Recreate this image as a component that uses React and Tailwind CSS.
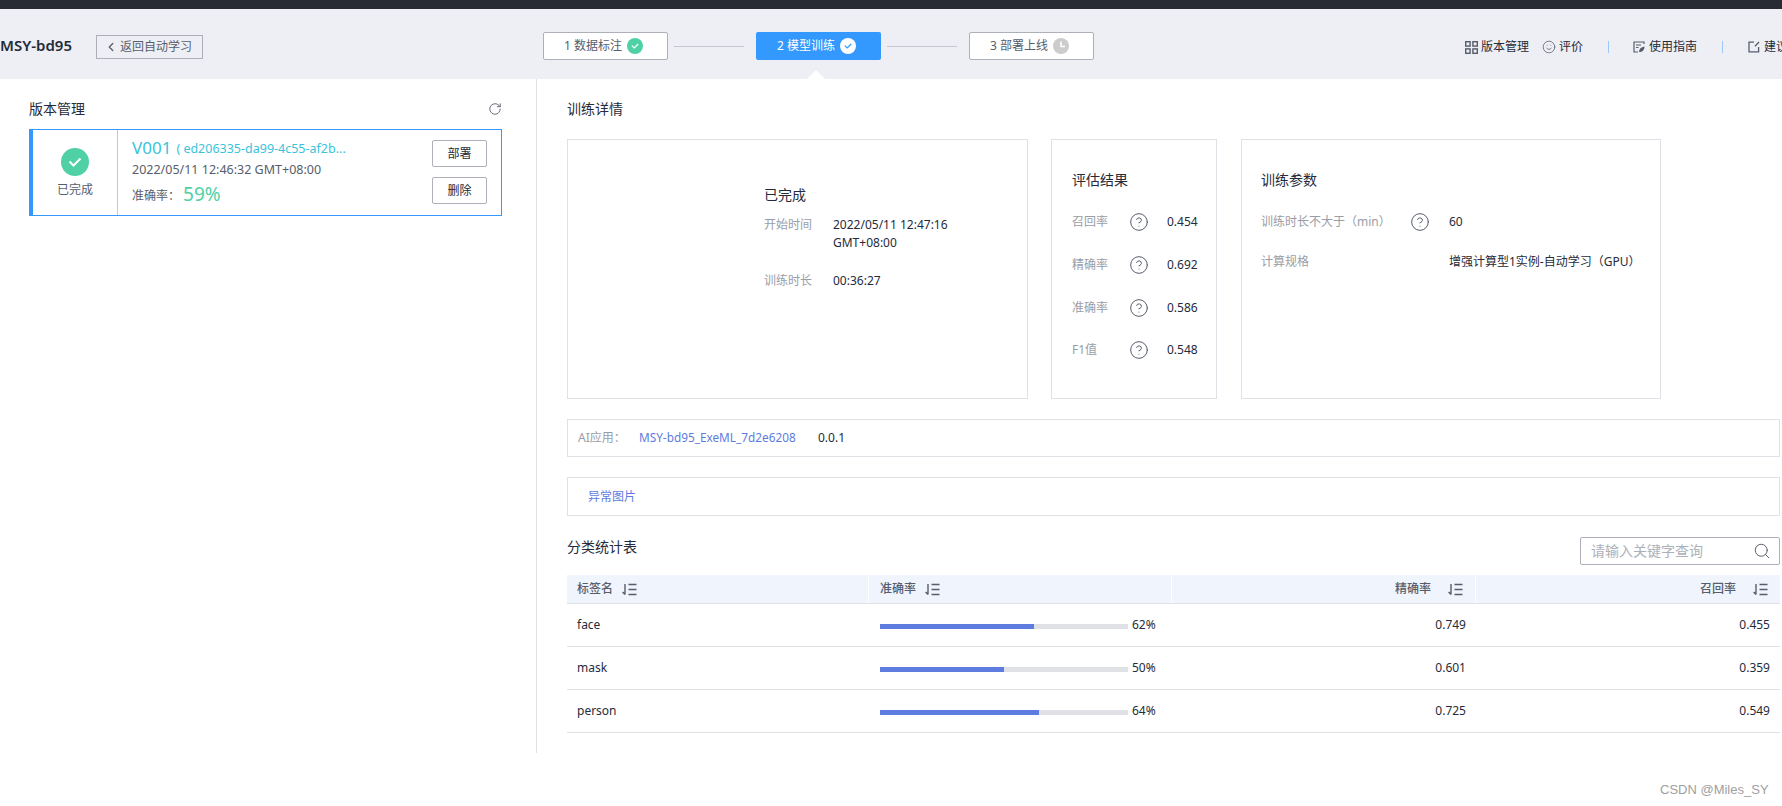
import React from "react";
import { ChevronLeft, RotateCw, Smile, Search, CircleHelp } from "lucide-react";

const SortIcon = () => (
  <svg width="15" height="13" viewBox="0 0 15 13" fill="none" stroke="#575d6c" strokeWidth="1.4" className="shrink-0">
    <path d="M3 1v10.5M0.6 9L3 11.5" />
    <path d="M6.5 1.5h8M6.5 6.5h8M6.5 11.5h8" strokeWidth="1.6" />
  </svg>
);

const CheckDot = ({ bg, stroke }) => (
  <svg width="16" height="16" viewBox="0 0 16 16" className="shrink-0">
    <circle cx="8" cy="8" r="8" fill={bg} />
    <path d="M4.8 7.6l2.4 2.4 4-4" fill="none" stroke={stroke} strokeWidth="1.2" />
  </svg>
);

const ClockDot = () => (
  <svg width="16" height="16" viewBox="0 0 16 16" className="shrink-0">
    <circle cx="8" cy="8" r="8" fill="#ccc" />
    <path d="M8 3.5v5h4" fill="none" stroke="#fff" strokeWidth="1.6" />
  </svg>
);

const GridIcon = () => (
  <svg width="13" height="13" viewBox="0 0 13 13" fill="none" stroke="#575d6c" strokeWidth="1.4" className="shrink-0">
    <rect x="0.7" y="0.7" width="4.4" height="4.4" />
    <rect x="7.9" y="0.7" width="4.4" height="4.4" />
    <rect x="0.7" y="7.9" width="4.4" height="4.4" />
    <rect x="7.9" y="7.9" width="4.4" height="4.4" />
  </svg>
);

const GuideIcon = () => (
  <svg width="12" height="12" viewBox="0 0 12 12" fill="none" stroke="#575d6c" strokeWidth="1.2" className="shrink-0">
    <path d="M11 3V1H1v10h4" />
    <path d="M3 4h5M3 6.5h2.5" strokeWidth="1" />
    <path d="M6 11c0-3 2-5 5.5-5.5C11.5 9 9.5 11 6 11z" fill="#575d6c" stroke="none" />
  </svg>
);

const FeedbackIcon = () => (
  <svg width="12" height="12" viewBox="0 0 12 12" fill="none" stroke="#575d6c" strokeWidth="1.3" className="shrink-0">
    <path d="M6 1.2H1v9.6h9.6V6" />
    <path d="M7 5.2L11 1" />
  </svg>
);

const Help = () => <CircleHelp size={20} strokeWidth={1.2} color="#575d6c" className="-ml-[2px]" />;

const metrics = [
  { label: "召回率", value: "0.454" },
  { label: "精确率", value: "0.692" },
  { label: "准确率", value: "0.586" },
  { label: "F1值", value: "0.548" },
];

const rows = [
  { name: "face", pct: 62, precision: "0.749", recall: "0.455" },
  { name: "mask", pct: 50, precision: "0.601", recall: "0.359" },
  { name: "person", pct: 64, precision: "0.725", recall: "0.549" },
];

const App = () => {
  return (
    <div className="w-full h-[806px] relative overflow-hidden bg-white text-xs text-[#252b3a] font-['Noto_Sans','Noto_Sans_CJK_SC',sans-serif]">
      <div className="h-[9px] bg-[#282b33]" />

      <header className="h-[70px] bg-[#eeeff4] flex items-start whitespace-nowrap">
        <div className="w-[96px] shrink-0 mt-[24px] text-[15px] leading-6 font-semibold">MSY-bd95</div>
        <button className="w-[107px] h-[24px] shrink-0 mt-[26px] border border-[#adb0b8] flex items-center pl-[7px] gap-[2px] text-[#575d6c]">
          <ChevronLeft size={14} strokeWidth={2.2} />
          <span>返回自动学习</span>
        </button>

        <div className="ml-[340px] mt-[23px] flex items-center shrink-0">
          <div className="w-[125px] h-[28px] pr-[4px] bg-white border border-[#adb0b8] rounded-[2px] flex items-center justify-center gap-[5px] text-[#575d6c]">
            <span>1 数据标注</span>
            <CheckDot bg="#4fd1a5" stroke="#fff" />
          </div>
          <div className="w-[70px] h-px bg-[#c8c9d0] ml-[6px] mr-[12px]" />
          <div className="relative w-[125px] h-[28px] pr-[4px] bg-[#3399ff] rounded-[2px] flex items-center justify-center gap-[5px] text-white">
            <span>2 模型训练</span>
            <CheckDot bg="#fff" stroke="#3399ff" />
            <div className="absolute left-[51px] top-[38px] w-0 h-0 border-x-[9px] border-x-transparent border-b-[9px] border-b-white" />
          </div>
          <div className="w-[70px] h-px bg-[#c8c9d0] ml-[6px] mr-[12px]" />
          <div className="w-[125px] h-[28px] pr-[4px] bg-white border border-[#adb0b8] rounded-[2px] flex items-center justify-center gap-[5px] text-[#575d6c]">
            <span>3 部署上线</span>
            <ClockDot />
          </div>
        </div>

        <nav className="ml-[371px] mt-[29px] h-[18px] flex items-center shrink-0">
          <GridIcon />
          <span className="ml-[3px]">版本管理</span>
          <Smile size={14} strokeWidth={1.3} color="#575d6c" className="ml-[13px]" />
          <span className="ml-[3px]">评价</span>
          <div className="w-px h-[12px] bg-[#9cc8f5] ml-[25px]" />
          <div className="ml-[24px]"><GuideIcon /></div>
          <span className="ml-[4px]">使用指南</span>
          <div className="w-px h-[12px] bg-[#9cc8f5] ml-[25px]" />
          <div className="ml-[25px]"><FeedbackIcon /></div>
          <span className="ml-[4px]">建议反馈</span>
        </nav>
      </header>

      <main className="flex items-start">
        <aside className="w-[537px] h-[674px] shrink-0 border-r border-[#dfe1e6] pl-[29px] pr-[34px] pt-[20px]">
          <div className="h-[20px] flex items-center justify-between text-sm">
            <span>版本管理</span>
            <RotateCw size={14} strokeWidth={1.5} color="#575d6c" />
          </div>
          <div className="mt-[10px] h-[87px] flex border border-[#3399ff] border-l-4">
            <div className="w-[85px] shrink-0 border-r border-[#c8c9d0] flex flex-col items-center pt-[18px]">
              <svg width="28" height="28" viewBox="0 0 28 28">
                <circle cx="14" cy="14" r="14" fill="#4fd1a5" />
                <path d="M8.5 13.5l4 4 7-7" fill="none" stroke="#fff" strokeWidth="2" />
              </svg>
              <span className="mt-[6px] text-[#575d6c]">已完成</span>
            </div>
            <div className="flex-1 pl-[14px] pt-[7px] whitespace-nowrap">
              <div className="h-[22px] flex items-center text-[#3ac4da]">
                <span className="text-[17px] leading-[22px]">V001</span>
                <span className="ml-[5px] text-[12.5px] mt-[2px]">( ed206335-da99-4c55-af2b...</span>
              </div>
              <div className="h-[18px] mt-[2px] leading-[18px] text-[12.5px] text-[#575d6c]">2022/05/11 12:46:32 GMT+08:00</div>
              <div className="h-[24px] mt-[3px] flex items-center text-[#575d6c]">
                <span className="mt-[3px]">准确率：</span>
                <span className="text-[19px] leading-6 text-[#4fd1a5] ml-[3px]">59%</span>
              </div>
            </div>
            <div className="flex flex-col gap-[10px] pt-[10px] pr-[14px]">
              <button className="w-[55px] h-[27px] border border-[#adb0b8] rounded-[2px]">部署</button>
              <button className="w-[55px] h-[27px] border border-[#adb0b8] rounded-[2px]">删除</button>
            </div>
          </div>
        </aside>

        <section className="w-[1243px] pl-[30px] pt-[20px] shrink-0">
          <div className="h-[20px] leading-5 text-sm">训练详情</div>

          <div className="mt-[20px] flex items-start">
            <div className="w-[461px] h-[260px] border border-[#dfe1e6] pl-[196px] pt-[45px]">
              <div className="text-sm leading-5">已完成</div>
              <div className="mt-[11px] flex leading-[18px]">
                <span className="w-[69px] text-[#9a9da6]">开始时间</span>
                <span className="w-[125px]">2022/05/11 12:47:16 GMT+08:00</span>
              </div>
              <div className="mt-[20px] flex leading-[18px]">
                <span className="w-[69px] text-[#9a9da6]">训练时长</span>
                <span>00:36:27</span>
              </div>
            </div>

            <div className="ml-[23px] w-[166px] h-[260px] border border-[#dfe1e6] pl-[20px] pt-[30px]">
              <div className="text-sm leading-5">评估结果</div>
              <div className="mt-[11px] grid grid-cols-[59px_36px_auto] auto-rows-[42.7px] items-center">
                {metrics.map((m) => (
                  <React.Fragment key={m.label}>
                    <span className="text-[#9a9da6]">{m.label}</span>
                    <Help />
                    <span>{m.value}</span>
                  </React.Fragment>
                ))}
              </div>
            </div>

            <div className="ml-[24px] w-[420px] h-[260px] border border-[#dfe1e6] pl-[19px] pt-[30px]">
              <div className="text-sm leading-5">训练参数</div>
              <div className="mt-[12px] grid grid-cols-[151px_37px_auto] auto-rows-[40px] items-center">
                <span className="text-[#9a9da6]">训练时长不大于（min）</span>
                <Help />
                <span>60</span>
                <span className="text-[#9a9da6]">计算规格</span>
                <span />
                <span>增强计算型1实例-自动学习（GPU）</span>
              </div>
            </div>
          </div>

          <div className="mt-[20px] w-[1213px] h-[38px] border border-[#dfe1e6] flex items-center pl-[10px]">
            <span className="w-[61px] text-[#9a9da6]">AI应用：</span>
            <span className="w-[179px] text-[11.8px] text-[#5e7ce0]">MSY-bd95_ExeML_7d2e6208</span>
            <span>0.0.1</span>
          </div>

          <div className="mt-[20px] w-[1213px] h-[39px] border border-[#dfe1e6] flex items-center pl-[20px] text-[#5e7ce0]">
            异常图片
          </div>

          <div className="mt-[21px] w-[1213px] h-[28px] flex items-start justify-between">
            <span className="text-sm leading-5">分类统计表</span>
            <div className="w-[200px] h-[28px] border border-[#adb0b8] rounded-[2px] flex items-center pl-[10px] pr-[8px] justify-between">
              <span className="text-sm text-[#adb0b8]">请输入关键字查询</span>
              <Search size={18} strokeWidth={1.3} color="#575d6c" />
            </div>
          </div>

          <div className="mt-[10px] w-[1213px]">
            <div className="grid grid-cols-[302px_303px_304px_304px] h-[29px] bg-[#f0f4fc] border-b border-[#dfe1e6] font-medium text-[#575d6c]">
              <div className="flex items-center pl-[10px] gap-[9px] border-r border-white">
                <span>标签名</span>
                <SortIcon />
              </div>
              <div className="flex items-center pl-[11px] gap-[9px] border-r border-white">
                <span>准确率</span>
                <SortIcon />
              </div>
              <div className="flex items-center justify-end pr-[12px] gap-[17px] border-r border-white">
                <span>精确率</span>
                <SortIcon />
              </div>
              <div className="flex items-center justify-end pr-[12px] gap-[17px]">
                <span>召回率</span>
                <SortIcon />
              </div>
            </div>
            {rows.map((r) => (
              <div key={r.name} className="grid grid-cols-[302px_303px_304px_304px] h-[43px] items-center border-b border-[#dfe1e6]">
                <div className="pl-[10px]">{r.name}</div>
                <div className="pl-[11px] flex items-center">
                  <div className="w-[248px] h-[5px] bg-[#dfe1e6] mt-[3px]">
                    <div className="h-full bg-[#5e7ce0]" style={{ width: `${r.pct}%` }} />
                  </div>
                  <span className="ml-[4px]">{r.pct}%</span>
                </div>
                <div className="text-right pr-[10px]">{r.precision}</div>
                <div className="text-right pr-[10px]">{r.recall}</div>
              </div>
            ))}
          </div>
        </section>
      </main>

      <div className="absolute left-[1660px] top-[782px] text-[13px] leading-4 text-[#a0a0a0] font-['Liberation_Sans',sans-serif]">
        CSDN @Miles_SY
      </div>
    </div>
  );
};

export default App;
